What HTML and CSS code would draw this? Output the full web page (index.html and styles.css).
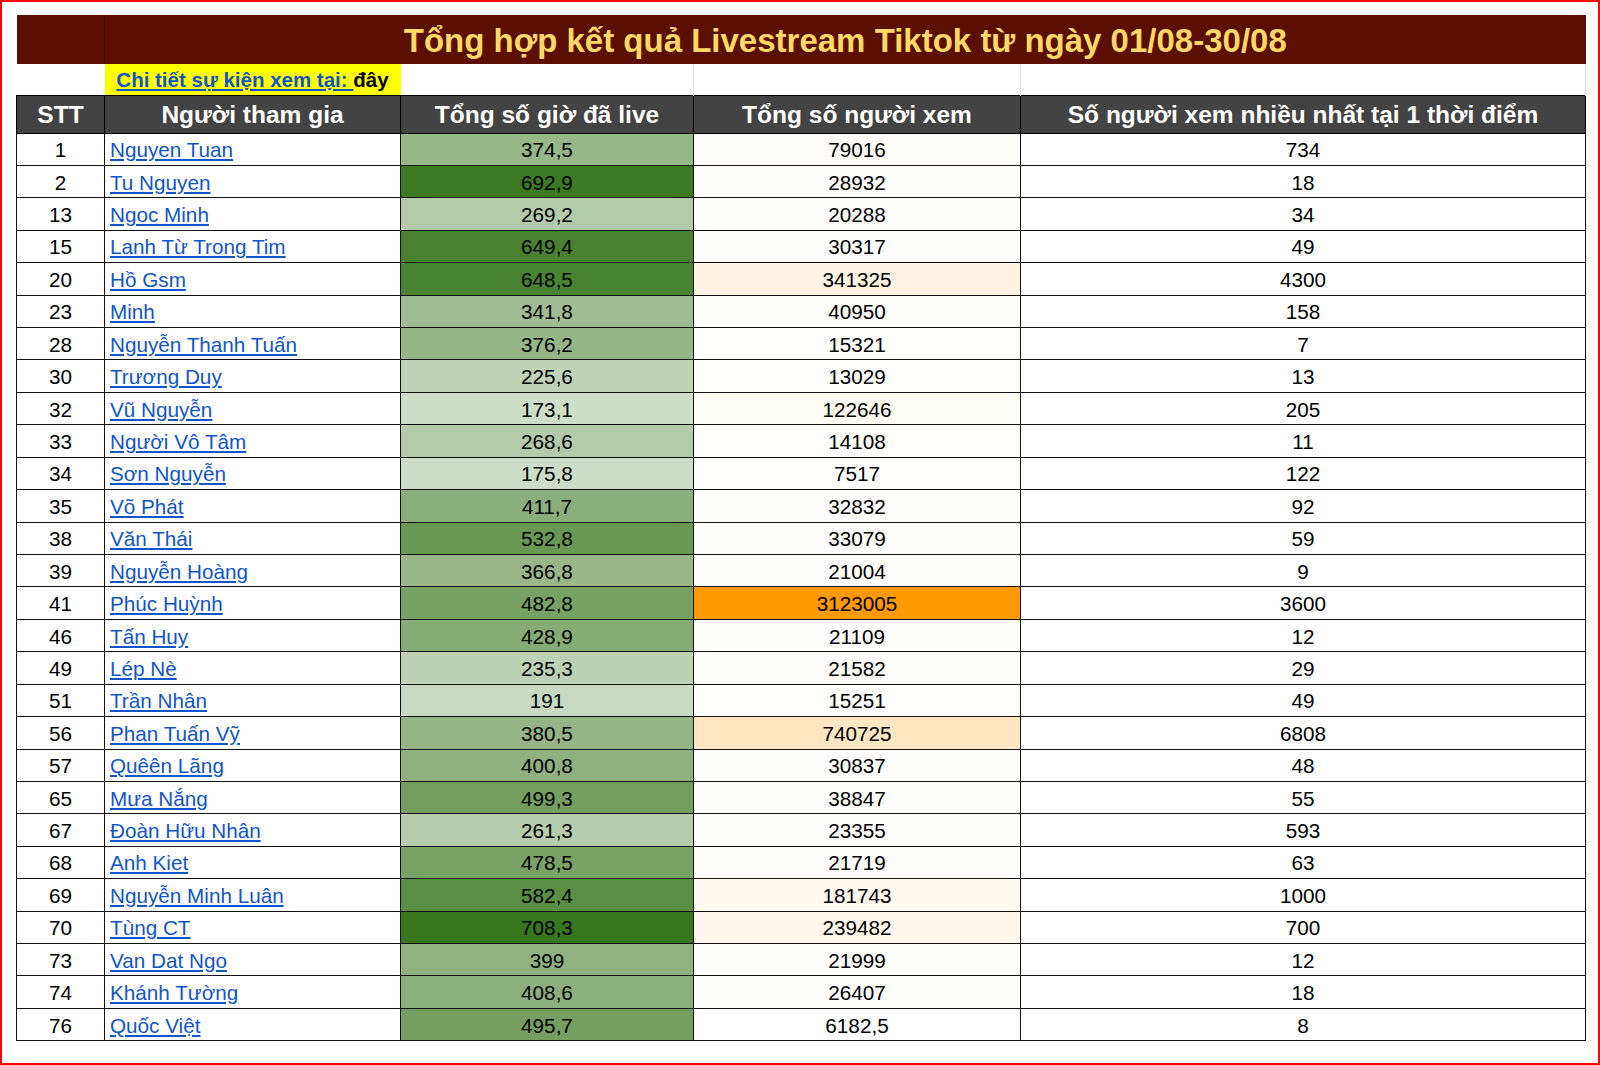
FILE: index.html
```html
<!DOCTYPE html>
<html lang="vi">
<head>
<meta charset="utf-8">
<title>Tổng hợp kết quả Livestream Tiktok</title>
<link rel="stylesheet" href="styles.css">
</head>
<body>
<div class="frame">
<table class="sheet">
<colgroup>
<col class="c-stt"><col class="c-name"><col class="c-hours"><col class="c-views"><col class="c-peak">
</colgroup>
<tbody>
<tr class="r-title">
<td class="corner"></td>
<td class="title" colspan="4">Tổng hợp kết quả Livestream Tiktok từ ngày 01/08-30/08</td>
</tr>
<tr class="r-link">
<td class="blank"></td>
<td class="yellow"><a class="ev-link" href="#">Chi tiết sự kiện xem tại: </a><span class="here">đây</span></td>
<td class="gap"></td>
<td class="gap"></td>
<td class="gap"></td>
</tr>
<tr class="r-head">
<th>STT</th>
<th>Người tham gia</th>
<th>Tổng số giờ đã live</th>
<th>Tổng số người xem</th>
<th>Số người xem nhiều nhất tại 1 thời điểm</th>
</tr>
<tr><td class="num">1</td><td class="name"><a href="#">Nguyen Tuan</a></td><td class="num" style="background:rgb(150,183,136)">374,5</td><td class="num" style="background:rgb(255,252,249)">79016</td><td class="num">734</td></tr>
<tr><td class="num">2</td><td class="name"><a href="#">Tu Nguyen</a></td><td class="num" style="background:rgb(60,121,34)">692,9</td><td class="num" style="background:rgb(255,254,253)">28932</td><td class="num">18</td></tr>
<tr><td class="num">13</td><td class="name"><a href="#">Ngoc Minh</a></td><td class="num" style="background:rgb(179,203,169)">269,2</td><td class="num" style="background:rgb(255,254,253)">20288</td><td class="num">34</td></tr>
<tr><td class="num">15</td><td class="name"><a href="#">Lanh Từ Trong Tim</a></td><td class="num" style="background:rgb(73,129,48)">649,4</td><td class="num" style="background:rgb(255,254,253)">30317</td><td class="num">49</td></tr>
<tr><td class="num">20</td><td class="name"><a href="#">Hồ Gsm</a></td><td class="num" style="background:rgb(73,130,48)">648,5</td><td class="num" style="background:rgb(255,244,227)">341325</td><td class="num">4300</td></tr>
<tr><td class="num">23</td><td class="name"><a href="#">Minh</a></td><td class="num" style="background:rgb(159,189,146)">341,8</td><td class="num" style="background:rgb(255,254,252)">40950</td><td class="num">158</td></tr>
<tr><td class="num">28</td><td class="name"><a href="#">Nguyễn Thanh Tuấn</a></td><td class="num" style="background:rgb(149,182,135)">376,2</td><td class="num" style="background:rgb(255,255,254)">15321</td><td class="num">7</td></tr>
<tr><td class="num">30</td><td class="name"><a href="#">Trương Duy</a></td><td class="num" style="background:rgb(192,211,183)">225,6</td><td class="num" style="background:rgb(255,255,254)">13029</td><td class="num">13</td></tr>
<tr><td class="num">32</td><td class="name"><a href="#">Vũ Nguyễn</a></td><td class="num" style="background:rgb(206,222,200)">173,1</td><td class="num" style="background:rgb(255,251,245)">122646</td><td class="num">205</td></tr>
<tr><td class="num">33</td><td class="name"><a href="#">Người Vô Tâm</a></td><td class="num" style="background:rgb(180,203,169)">268,6</td><td class="num" style="background:rgb(255,255,254)">14108</td><td class="num">11</td></tr>
<tr><td class="num">34</td><td class="name"><a href="#">Sơn Nguyễn</a></td><td class="num" style="background:rgb(206,221,199)">175,8</td><td class="num" style="background:rgb(255,255,254)">7517</td><td class="num">122</td></tr>
<tr><td class="num">35</td><td class="name"><a href="#">Võ Phát</a></td><td class="num" style="background:rgb(139,175,124)">411,7</td><td class="num" style="background:rgb(255,254,252)">32832</td><td class="num">92</td></tr>
<tr><td class="num">38</td><td class="name"><a href="#">Văn Thái</a></td><td class="num" style="background:rgb(105,152,85)">532,8</td><td class="num" style="background:rgb(255,254,252)">33079</td><td class="num">59</td></tr>
<tr><td class="num">39</td><td class="name"><a href="#">Nguyễn Hoàng</a></td><td class="num" style="background:rgb(152,184,138)">366,8</td><td class="num" style="background:rgb(255,254,253)">21004</td><td class="num">9</td></tr>
<tr><td class="num">41</td><td class="name"><a href="#">Phúc Huỳnh</a></td><td class="num" style="background:rgb(119,162,101)">482,8</td><td class="num" style="background:rgb(255,153,0)">3123005</td><td class="num">3600</td></tr>
<tr><td class="num">46</td><td class="name"><a href="#">Tấn Huy</a></td><td class="num" style="background:rgb(134,172,118)">428,9</td><td class="num" style="background:rgb(255,254,253)">21109</td><td class="num">12</td></tr>
<tr><td class="num">49</td><td class="name"><a href="#">Lép Nè</a></td><td class="num" style="background:rgb(189,209,180)">235,3</td><td class="num" style="background:rgb(255,254,253)">21582</td><td class="num">29</td></tr>
<tr><td class="num">51</td><td class="name"><a href="#">Trần Nhân</a></td><td class="num" style="background:rgb(201,218,194)">191</td><td class="num" style="background:rgb(255,255,254)">15251</td><td class="num">49</td></tr>
<tr><td class="num">56</td><td class="name"><a href="#">Phan Tuấn Vỹ</a></td><td class="num" style="background:rgb(148,181,134)">380,5</td><td class="num" style="background:rgb(255,231,195)">740725</td><td class="num">6808</td></tr>
<tr><td class="num">57</td><td class="name"><a href="#">Quêên Lãng</a></td><td class="num" style="background:rgb(142,177,127)">400,8</td><td class="num" style="background:rgb(255,254,252)">30837</td><td class="num">48</td></tr>
<tr><td class="num">65</td><td class="name"><a href="#">Mưa Nắng</a></td><td class="num" style="background:rgb(115,158,96)">499,3</td><td class="num" style="background:rgb(255,254,252)">38847</td><td class="num">55</td></tr>
<tr><td class="num">67</td><td class="name"><a href="#">Đoàn Hữu Nhân</a></td><td class="num" style="background:rgb(182,204,172)">261,3</td><td class="num" style="background:rgb(255,254,253)">23355</td><td class="num">593</td></tr>
<tr><td class="num">68</td><td class="name"><a href="#">Anh Kiet</a></td><td class="num" style="background:rgb(121,162,102)">478,5</td><td class="num" style="background:rgb(255,254,253)">21719</td><td class="num">63</td></tr>
<tr><td class="num">69</td><td class="name"><a href="#">Nguyễn Minh Luân</a></td><td class="num" style="background:rgb(91,142,69)">582,4</td><td class="num" style="background:rgb(255,249,240)">181743</td><td class="num">1000</td></tr>
<tr><td class="num">70</td><td class="name"><a href="#">Tùng CT</a></td><td class="num" style="background:rgb(56,118,29)">708,3</td><td class="num" style="background:rgb(255,247,235)">239482</td><td class="num">700</td></tr>
<tr><td class="num">73</td><td class="name"><a href="#">Van Dat Ngo</a></td><td class="num" style="background:rgb(143,178,128)">399</td><td class="num" style="background:rgb(255,254,253)">21999</td><td class="num">12</td></tr>
<tr><td class="num">74</td><td class="name"><a href="#">Khánh Tường</a></td><td class="num" style="background:rgb(140,176,125)">408,6</td><td class="num" style="background:rgb(255,254,253)">26407</td><td class="num">18</td></tr>
<tr><td class="num">76</td><td class="name"><a href="#">Quốc Việt</a></td><td class="num" style="background:rgb(116,159,97)">495,7</td><td class="num" style="background:rgb(255,255,255)">6182,5</td><td class="num">8</td></tr>
</tbody>
</table>
</div>
</body>
</html>
```

FILE: styles.css
```css
html, body {
  margin: 0;
  padding: 0;
  background: #ffffff;
}

.frame {
  box-sizing: border-box;
  width: 1600px;
  height: 1065px;
  border: 2px solid #ff0000;
  padding: 13px 0 0 14px;
  background: #ffffff;
  font-family: "Liberation Sans", Arial, sans-serif;
}

.sheet {
  width: 1569px;
  table-layout: fixed;
  border-collapse: collapse;
  font-family: "Liberation Sans", Arial, sans-serif;
}

.c-stt { width: 88px; }
.c-name { width: 296px; }
.c-hours { width: 293px; }
.c-views { width: 327px; }
.c-peak { width: 565px; }

.sheet td, .sheet th {
  padding: 0;
  vertical-align: middle;
  white-space: nowrap;
  overflow: hidden;
}

/* title band */
.r-title { height: 49px; }
.r-title td {
  background: #5b0f00;
  border: none;
}
.r-title .corner {
  border-right: 1px solid #4a0b00;
}
.r-title .title {
  color: #ffd966;
  font-weight: bold;
  font-size: 33px;
  text-align: center;
  padding-top: 2px;
}

/* link row */
.r-link { height: 31px; }
.r-link td {
  background: #ffffff;
  border: none;
}
.r-link .gap {
  border-right: 1px solid #e0e0e0;
}
.r-link .yellow {
  background: #ffff00;
  text-align: center;
  font-size: 20.5px;
  font-weight: bold;
  padding-top: 1px;
}
.ev-link {
  color: #1155cc;
  text-decoration: underline;
}
.here {
  color: #000000;
}

/* header row */
.r-head { height: 38px; }
.r-head th {
  background: #434343;
  color: #ffffff;
  font-weight: bold;
  font-size: 24.5px;
  text-align: center;
  border: 1px solid #000000;
  padding-top: 1px;
}

/* data rows */
.sheet tr:not(.r-title):not(.r-link):not(.r-head) {
  height: 32.43px;
}
.sheet td.num,
.sheet td.name {
  border: 1px solid #111111;
  font-size: 20.7px;
  color: #000000;
  padding-top: 2px;
}
.sheet td.num {
  text-align: center;
}
.sheet td.name {
  text-align: left;
  padding-left: 5px;
}
.name a {
  color: #1155cc;
  text-decoration: underline;
}
```
